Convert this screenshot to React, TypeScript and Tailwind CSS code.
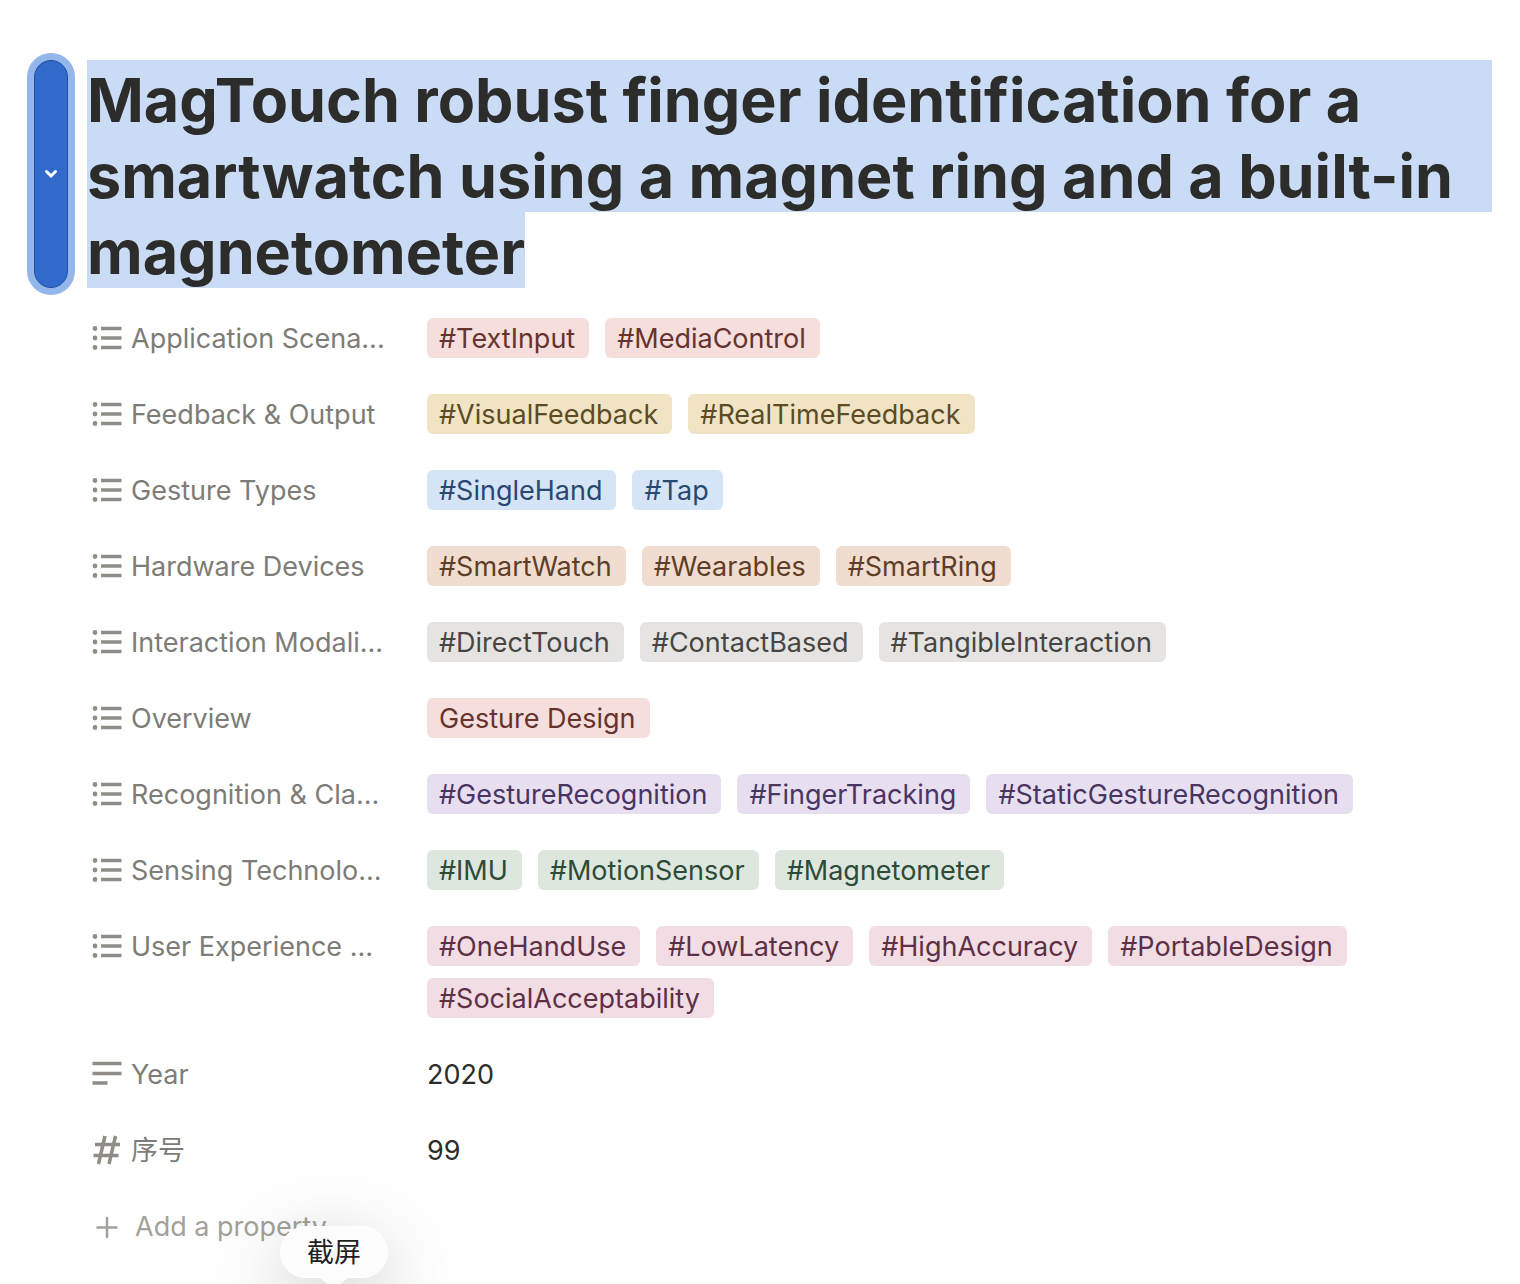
import { ReactNode } from "react";

type Kind = "list" | "text" | "number";
type Property = { name: string; kind: Kind; color?: string; tags?: string[]; value?: string };

const red = "bg-[#f5dedc] text-[#66332f]";
const yellow = "bg-[#f0e4c5] text-[#5c4b24]";
const blue = "bg-[#d5e4f6] text-[#294871]";
const orange = "bg-[#f1ddd0] text-[#5f3e28]";
const gray = "bg-[#e5e4e2] text-[#474643]";
const purple = "bg-[#e7dff0] text-[#493462]";
const green = "bg-[#dde7de] text-[#2d4b39]";
const pink = "bg-[#f2dde4] text-[#5e3045]";

const properties: Property[] = [
  { name: "Application Scena...", kind: "list", color: red, tags: ["#TextInput", "#MediaControl"] },
  { name: "Feedback & Output", kind: "list", color: yellow, tags: ["#VisualFeedback", "#RealTimeFeedback"] },
  { name: "Gesture Types", kind: "list", color: blue, tags: ["#SingleHand", "#Tap"] },
  { name: "Hardware Devices", kind: "list", color: orange, tags: ["#SmartWatch", "#Wearables", "#SmartRing"] },
  { name: "Interaction Modali...", kind: "list", color: gray, tags: ["#DirectTouch", "#ContactBased", "#TangibleInteraction"] },
  { name: "Overview", kind: "list", color: red, tags: ["Gesture Design"] },
  { name: "Recognition & Cla...", kind: "list", color: purple, tags: ["#GestureRecognition", "#FingerTracking", "#StaticGestureRecognition"] },
  { name: "Sensing Technolo...", kind: "list", color: green, tags: ["#IMU", "#MotionSensor", "#Magnetometer"] },
  { name: "User Experience ...", kind: "list", color: pink, tags: ["#OneHandUse", "#LowLatency", "#HighAccuracy", "#PortableDesign", "#SocialAcceptability"] },
  { name: "Year", kind: "text", value: "2020" },
  { name: "序号", kind: "number", value: "99" },
];

const iconPaths: Record<Kind, ReactNode> = {
  list: (
    <>
      <path d="M9 5.500h20.500M9 15h20.500M9 24.500h20.500" />
      <path d="M3 5.500h.01M3 15h.01M3 24.500h.01" strokeWidth="4.800" strokeLinecap="round" />
    </>
  ),
  text: <path d="M.5 4.500h29M.5 14.500h29M.5 24h15" />,
  number: <path d="M13 1 6.500 29M23.500 1 17 29M3 9.500h25M1.500 20.500h25" />,
};

function PropertyIcon({ kind }: { kind: Kind }) {
  return (
    <svg viewBox="0 0 30 30" className="size-[30px] shrink-0 text-[#8f8d86]" fill="none" stroke="currentColor" strokeWidth="3.500" strokeLinejoin="round" aria-hidden="true">
      {iconPaths[kind]}
    </svg>
  );
}

export default function App() {
  return (
    <main className="min-h-screen overflow-hidden bg-white pt-[60px] pr-7 pl-[34px] font-['Inter','Noto_Sans_CJK_SC',sans-serif] text-[#2c2c2a]">
      <header className="flex items-stretch gap-[19px]">
        <button aria-label="Collapse properties" className="flex w-[34px] shrink-0 items-center justify-center rounded-full border border-[#1f509f] bg-[#326acb] text-white ring-7 ring-[#94b6ea]">
          <svg viewBox="0 0 14 10" className="w-3.5" fill="none" stroke="currentColor" strokeWidth="3" strokeLinecap="round" aria-hidden="true">
            <path d="m2.500 2.500 4.500 4.500 4.500-4.500" />
          </svg>
        </button>
        <h1 className="min-w-0 flex-1 text-[61px] leading-[72px] font-bold">
          <span className="block bg-[#cadbf6] pt-1">MagTouch robust finger identification for a</span>
          <span className="block bg-[#cadbf6] pt-1">smartwatch using a magnet ring and a built-in</span>
          <span className="block w-fit bg-[#cadbf6] pt-1">magnetometer</span>
        </h1>
      </header>
      <dl className="mt-3 ml-[58px] text-[27px]">
        {properties.map((p) => (
          <div key={p.name} className="flex">
            <dt className="flex h-[76px] w-[335px] shrink-0 items-center gap-[9px] whitespace-nowrap text-[#7d7c77]">
              <PropertyIcon kind={p.kind} />
              <span className="pt-0.5">{p.name}</span>
            </dt>
            <dd className="flex min-w-0 flex-1 flex-wrap gap-x-4 gap-y-3 py-[18px] leading-[38px]">
              {p.tags ? (
                p.tags.map((t) => (
                  <span key={t} className={`rounded-md pt-0.5 pr-3.5 pl-3 ${p.color}`}>
                    {t}
                  </span>
                ))
              ) : (
                <span className="pt-0.5">{p.value}</span>
              )}
            </dd>
          </div>
        ))}
      </dl>
      <div className="relative -mb-10 ml-[58px]">
        <button className="flex h-[76px] items-center gap-[13px] text-[27px] text-[#a3a199]">
          <svg viewBox="0 0 30 30" className="size-[30px]" fill="none" stroke="currentColor" strokeWidth="2.500" strokeLinecap="round" aria-hidden="true">
            <path d="M5.500 16.500h19M15 7v19" />
          </svg>
          <span className="pt-0.5">Add a property</span>
        </button>
        <div role="tooltip" className="absolute top-[38px] left-[188px] rounded-full border border-white bg-[#fcfcfc] px-[26px] pt-1.5 pb-1 text-[27px] leading-10 text-[#1f1f1f] shadow-[0_22px_80px_rgba(0,0,0,0.25)]">
          截屏
          <svg viewBox="0 0 40 10" className="absolute top-full left-1/2 w-10 -translate-x-1/2" fill="#fcfcfc" aria-hidden="true">
            <path d="M0 0h40C30 0 27 10 20 10S10 0 0 0Z" />
          </svg>
        </div>
      </div>
    </main>
  );
}
